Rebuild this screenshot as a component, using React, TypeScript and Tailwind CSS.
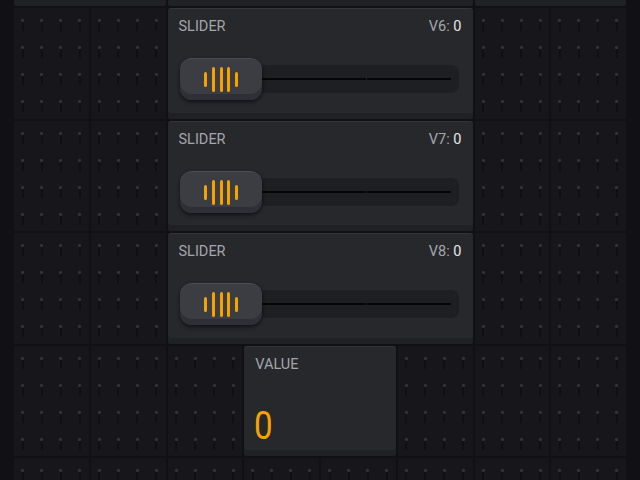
import type { ReactNode } from "react";

const cellDots = Array.from({ length: 16 });
const bgCells = Array.from({ length: 34 });

function Dot() {
  return (
    <div className="flex flex-col items-center w-[3px]">
      <div className="w-[3px] h-[3px] rounded-[1px] bg-[#323237]" />
      <div className="w-[2px] h-[9px] bg-[#101013]" />
    </div>
  );
}

function GridCell() {
  return (
    <div className="bg-[#17171b] pl-[7px] pt-[11px]">
      <div className="grid grid-cols-[repeat(4,19px)] auto-rows-[27px]">
        {cellDots.map((_, i) => (
          <Dot key={i} />
        ))}
      </div>
    </div>
  );
}

function Card({ className, children }: { className: string; children?: ReactNode }) {
  return (
    <div
      className={`rounded-[3px] bg-[#27282c] border-t border-t-[#34353a] shadow-[inset_0_-6px_0_#202124] ${className}`}
    >
      {children}
    </div>
  );
}

function Handle() {
  return (
    <div className="relative z-10 shrink-0 w-[82px] h-[42px] rounded-[12px] bg-[#3b3d43] border-t border-t-[#4b4d54] shadow-[inset_0_-6px_0_#2e3035,0_2px_4px_rgba(0,0,0,0.6)] flex items-center justify-center gap-[4.7px]">
      <div className="w-[3px] h-[15px] rounded-full bg-[#f5a300]" />
      <div className="w-[3px] h-[25px] rounded-full bg-[#f5a300]" />
      <div className="w-[3px] h-[25px] rounded-full bg-[#f5a300]" />
      <div className="w-[3px] h-[25px] rounded-full bg-[#f5a300]" />
      <div className="w-[3px] h-[15px] rounded-full bg-[#f5a300]" />
    </div>
  );
}

function SliderWidget({ pin, className }: { pin: string; className: string }) {
  return (
    <Card className={className}>
      <div className="flex justify-between px-[11px] pt-[9px] text-[14.5px] leading-[17px] text-[#a4a6aa]">
        <span>SLIDER</span>
        <span>
          {pin}: <span className="text-[#e6e6e6]">0</span>
        </span>
      </div>
      <div className="flex items-center pl-[12.5px] pr-[13.5px] mt-[23px]">
        <Handle />
        <div className="flex-1 h-[28px] -ml-[4px] rounded-r-[8px] bg-[#1e1f22] flex items-center pr-[8px]">
          <div className="w-[108px] h-[2px] bg-[#060607]" />
          <div className="w-[1px] h-[2px] bg-[#1e1f22]" />
          <div className="flex-1 h-[2px] bg-[#060607]" />
        </div>
      </div>
    </Card>
  );
}

export default function App() {
  return (
    <div className="w-[640px] h-[480px] overflow-hidden bg-[#111115] font-['Roboto',sans-serif]">
      <div className="grid grid-cols-[repeat(8,74.75px)] auto-rows-[110.5px] gap-[2px] pl-[14px] -mt-[104.5px]">
        <Card className="row-start-1 col-start-1 col-span-2" />
        <Card className="row-start-1 col-start-3 col-span-4" />
        <Card className="row-start-1 col-start-7 col-span-2" />
        <SliderWidget pin="V6" className="row-start-2 col-start-3 col-span-4" />
        <SliderWidget pin="V7" className="row-start-3 col-start-3 col-span-4" />
        <SliderWidget pin="V8" className="row-start-4 col-start-3 col-span-4" />
        <Card className="row-start-5 col-start-4 col-span-2">
          <div className="px-[11px] pt-[9px] text-[14.5px] leading-[17px] text-[#a4a6aa]">VALUE</div>
          <div className="px-[10px] mt-[34px] text-[39px] leading-[39px] text-[#f5a300]">
            <span className="inline-block scale-x-[0.85] origin-left">0</span>
          </div>
        </Card>
        {bgCells.map((_, i) => (
          <GridCell key={i} />
        ))}
      </div>
    </div>
  );
}
